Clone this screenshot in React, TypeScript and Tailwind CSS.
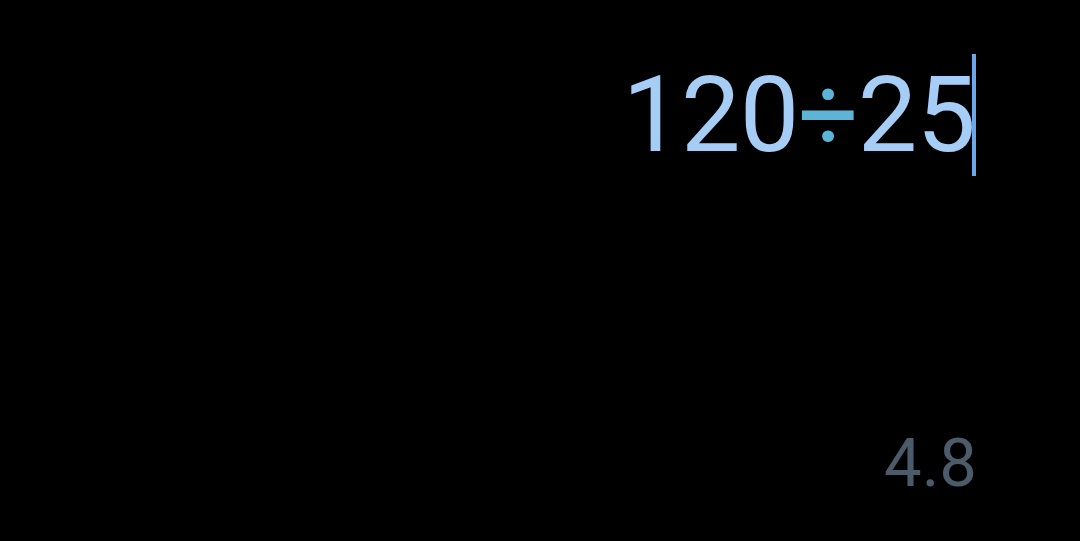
import React from "react";

export default function App() {
  return (
    <div className="w-[1080px] h-[541px] bg-black flex flex-col items-end pr-[104px]" style={{ fontFamily: "Roboto, sans-serif" }}>
      <div className="mt-[50px] flex items-center h-[130px]">
        <span className="text-[106px] leading-none text-[#a6cdf6] tracking-[-1px]">
          120<span className="text-[#5cb5d8]">÷</span>25
        </span>
        <span className="w-[4px] h-[122px] bg-[#6ea6ea] ml-[-3px]" />
      </div>
      <div className="mt-[250px] text-[67px] leading-none text-[#4b5b6a] mr-[-1px]">4.8</div>
    </div>
  );
}
